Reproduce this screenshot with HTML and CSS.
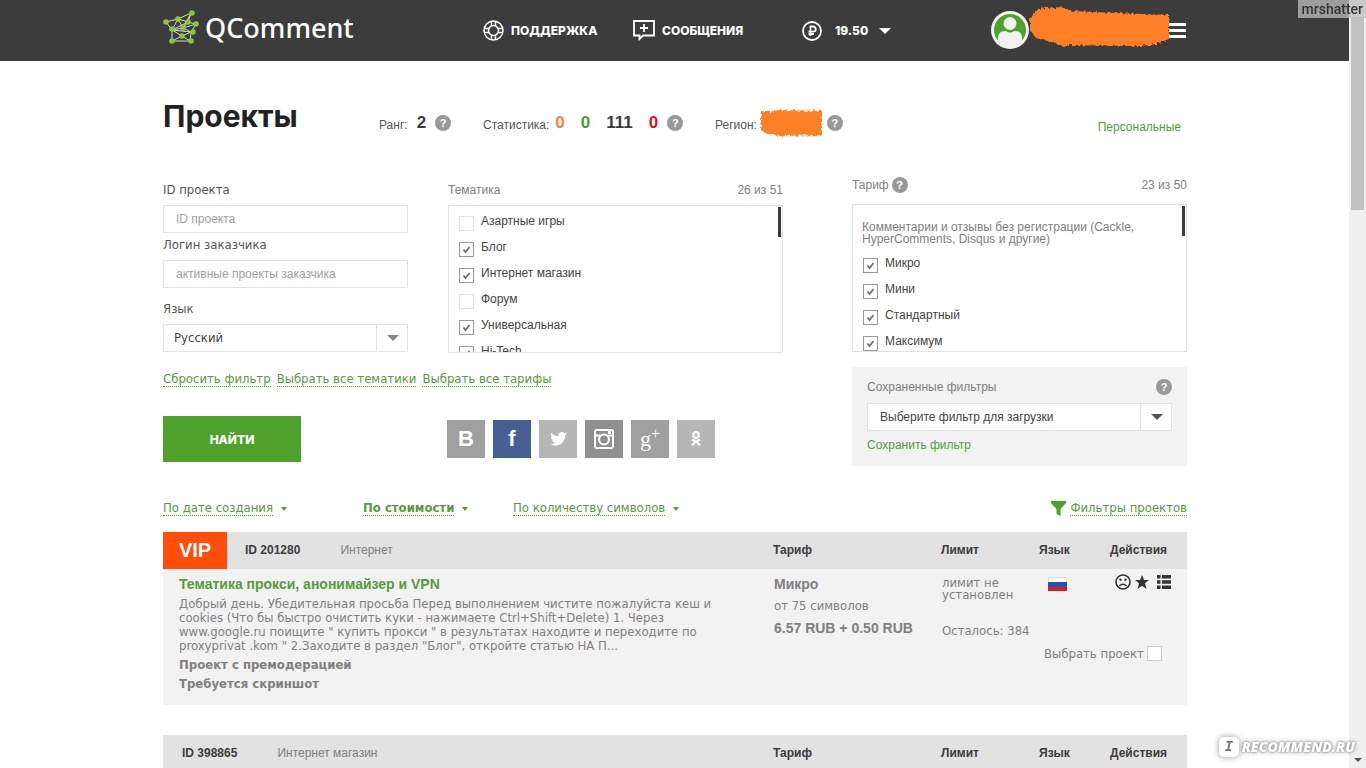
FILE: index.html
```html
<!DOCTYPE html>
<html lang="ru">
<head>
<meta charset="utf-8">
<title>Проекты — QComment</title>
<link rel="stylesheet" href="styles.css">
</head>
<body>
<svg class="defs" aria-hidden="true">
  <defs>
    <filter id="rough" x="-5%" y="-15%" width="110%" height="130%">
      <feTurbulence type="fractalNoise" baseFrequency="0.35" numOctaves="2" seed="4"/>
      <feDisplacementMap in="SourceGraphic" scale="5"/>
      <feGaussianBlur stdDeviation="0.6"/>
    </filter>
  </defs>
</svg>

<header class="topbar">
  <div class="wrap topbar-in">
    <a class="logo" href="#">
      <svg width="36" height="36" viewBox="0 0 36 36" aria-hidden="true">
        <path d="M3 12L15 9L28 3L25 12L33 14L28 22L27 31H9V20L3 12ZM15 9L20 18L25 12L9 20L20 18L33 14M20 18L28 22L19 26L27 31M9 20L19 26L9 31M28 3L20 18M9 20L15 9L25 12M9 20L28 22" fill="none" stroke="#d6dccb" stroke-width="1"/>
        <g fill="#8cc63f"><circle cx="3" cy="12" r="2.8"/><circle cx="15" cy="9" r="2.8"/><circle cx="29" cy="3" r="2.8"/><circle cx="25" cy="12" r="2.8"/><circle cx="33" cy="14" r="2.8"/><circle cx="20" cy="18" r="2.8"/><circle cx="9" cy="19" r="2.8"/><circle cx="30" cy="22" r="2.8"/><circle cx="19" cy="26" r="2.8"/><circle cx="9" cy="31" r="2.8"/><circle cx="28" cy="31" r="2.8"/></g>
      </svg>
      <span>QComment</span>
    </a>
    <nav class="topnav">
      <a class="nav-support" href="#">
        <svg width="21" height="21" viewBox="0 0 21 21" fill="none" stroke="#fff" stroke-width="1.5" aria-hidden="true"><circle cx="10.500" cy="10.500" r="9.500"/><circle cx="10.500" cy="10.500" r="5"/><path d="M8.500 1v5M12.500 1v5M8.500 15v5M12.500 15v5M1 8.500h5M1 12.500h5M15 8.500h5M15 12.500h5"/></svg>
        Поддержка</a>
      <a class="nav-messages" href="#">
        <svg width="22" height="21" viewBox="0 0 22 21" fill="none" stroke="#fff" stroke-width="1.800" aria-hidden="true"><path d="M1 1h20v14.500H10L6.500 19v-3.500H1zM11 4v8M7 8h8"/></svg>
        Сообщения</a>
      <button class="nav-balance" type="button">
        <svg width="20" height="20" viewBox="0 0 20 20" fill="none" stroke="#fff" stroke-width="1.800" aria-hidden="true"><circle cx="10" cy="10" r="9"/><path d="M8.500 15V5.500h2.700a2.500 2.500 0 0 1 0 5.200H6.500M6.500 13h5.500"/></svg>
        <span>19.50</span>
        <i class="tri tri-white"></i>
      </button>
    </nav>
    <div class="user">
      <svg class="avatar" width="38" height="38" viewBox="0 0 38 38" role="img" aria-label="Аватар"><circle cx="19" cy="19" r="19" fill="#f1f1f1"/><circle cx="19" cy="19" r="16" fill="#4ea22c"/><circle cx="19" cy="12.500" r="6.500" fill="#f1f1f1"/><path d="M7 30V27q0-7 7-7h1q4 3 8 0h1q7 0 7 7v3q-3 6-12 6t-12-6z" fill="#f1f1f1"/></svg>
      <svg class="smear" width="148" height="46" viewBox="0 0 148 46" aria-hidden="true"><path filter="url(#rough)" fill="#ff7f27" d="M4 16Q10 3 22 4L35 3L46 7L90 9L143 11V35L130 40L113 42L42 41L38 43L29 39L10 34L4 26Z"/></svg>
      <button class="burger" type="button" aria-label="Меню"><i></i><i></i><i></i></button>
    </div>
  </div>
</header>

<main class="wrap">
  <section class="heading">
    <h1>Проекты</h1>
    <div class="fact fact-rank"><span>Ранг:</span><b>2</b><button class="help" type="button">?</button></div>
    <div class="fact fact-stat"><span>Статистика:</span><b class="orange">0</b><b class="green">0</b><b>111</b><b class="red">0</b><button class="help" type="button">?</button></div>
    <div class="fact fact-region"><span>Регион:</span><svg width="66" height="30" viewBox="0 0 66 30" aria-hidden="true"><path filter="url(#rough)" fill="#ff7f27" d="M2 3L10 4L20 2L63 3V27L22 28L8 26L2 22Z"/></svg><button class="help" type="button">?</button></div>
    <a class="personal" href="#">Персональные</a>
  </section>

  <form class="filters">
    <div class="filters-left">
      <div class="filters-grid">
        <div class="fields">
          <label for="pid">ID проекта</label>
          <input class="text" id="pid" type="text" placeholder="ID проекта">
          <label for="login">Логин заказчика</label>
          <input class="text" id="login" type="text" placeholder="активные проекты заказчика">
          <label class="label-lang" for="lang">Язык</label>
          <div class="pick"><select id="lang"><option>Русский</option></select><i class="tri"></i></div>
        </div>
        <div class="topic">
          <div class="list-head"><span>Тематика</span><span>26 из 51</span></div>
          <div class="list">
            <label><input type="checkbox">Азартные игры</label>
            <label><input type="checkbox" checked>Блог</label>
            <label><input type="checkbox" checked>Интернет магазин</label>
            <label><input type="checkbox">Форум</label>
            <label><input type="checkbox" checked>Универсальная</label>
            <label><input type="checkbox" checked>Hi-Tech</label>
            <i class="thumb"></i>
          </div>
        </div>
      </div>
      <div class="quick">
        <a class="dotted" href="#">Сбросить фильтр</a>
        <a class="dotted" href="#">Выбрать все тематики</a>
        <a class="dotted" href="#">Выбрать все тарифы</a>
      </div>
      <div class="submit-row">
        <button class="find" type="submit">Найти</button>
        <div class="social">
          <a class="vk" href="#">B</a>
          <a class="fb" href="#">f</a>
          <a class="tw" href="#" aria-label="Twitter"><svg width="17" height="14" viewBox="0 0 24 20" fill="#fff"><path d="M24 2.400c-.9.400-1.800.700-2.800.8 1-.6 1.800-1.600 2.200-2.700-1 .6-2 1-3.100 1.200A4.900 4.900 0 0 0 11.900 6C7.700 5.800 4.100 3.800 1.700.9A4.900 4.900 0 0 0 3.200 7.500c-.8 0-1.600-.2-2.200-.6 0 2.300 1.600 4.400 3.900 4.900-.7.200-1.500.200-2.200.1.600 2 2.400 3.400 4.600 3.400A9.900 9.900 0 0 1 0 17.300 14 14 0 0 0 7.500 19.500c9.200 0 14.300-7.700 14-14.600 1-.7 1.800-1.600 2.500-2.500z"/></svg></a>
          <a class="ig" href="#" aria-label="Instagram"><svg width="20" height="20" viewBox="0 0 20 20" fill="none" stroke="#fff"><rect x="1" y="1" width="18" height="18" rx="2" stroke-width="2"/><path d="M1 6.500h5M14 6.500h5" stroke-width="2"/><circle cx="10" cy="10.500" r="5" stroke-width="2.200"/><path d="M14 3.500h3" stroke-width="3"/></svg></a>
          <a class="gp" href="#">g<sup>+</sup></a>
          <a class="ok" href="#" aria-label="Одноклассники"><svg width="12" height="16" viewBox="0 0 12 16" fill="none" stroke="#fff" stroke-width="2.200"><circle cx="6" cy="4" r="2.800"/><path d="M2 8.600q4 2.600 8 0M6 10l-4 4.500M6 10l4 4.500"/></svg></a>
        </div>
      </div>
    </div>
    <div class="filters-right">
      <div class="list-head"><span class="with-help">Тариф <button class="help" type="button">?</button></span><span>23 из 50</span></div>
      <div class="list list-tariff">
        <p>Комментарии и отзывы без регистрации (Cackle, HyperComments, Disqus и другие)</p>
        <label><input type="checkbox" checked>Микро</label>
        <label><input type="checkbox" checked>Мини</label>
        <label><input type="checkbox" checked>Стандартный</label>
        <label><input type="checkbox" checked>Максимум</label>
        <i class="thumb"></i>
      </div>
      <div class="saved">
        <div class="saved-head"><label for="saved">Сохраненные фильтры</label><button class="help" type="button">?</button></div>
        <div class="pick pick-saved"><select id="saved"><option>Выберите фильтр для загрузки</option></select><i class="tri tri-dark"></i></div>
        <a href="#">Сохранить фильтр</a>
      </div>
    </div>
  </form>

  <div class="sort">
    <span class="sort-date"><a class="dotted" href="#">По дате создания</a><i class="tri tri-green"></i></span>
    <span class="sort-cost"><a class="dotted" href="#">По стоимости</a><i class="tri tri-green"></i></span>
    <span><a class="dotted" href="#">По количеству символов</a><i class="tri tri-green"></i></span>
    <span class="sort-filters"><svg width="15" height="15" viewBox="0 0 15 15" aria-hidden="true"><path d="M0 0h15v2L9.500 8v7L5.500 13V8L0 2z" fill="#4ea22c"/></svg><a class="dotted" href="#">Фильтры проектов</a></span>
  </div>

  <table class="project">
    <colgroup><col><col class="c-tariff"><col class="c-limit"><col class="c-lang"><col class="c-actions"></colgroup>
    <thead>
      <tr><th><div class="ident"><strong class="vip">VIP</strong><span class="pid">ID 201280</span><span class="cat">Интернет</span></div></th><th>Тариф</th><th>Лимит</th><th>Язык</th><th>Действия</th></tr>
    </thead>
    <tbody>
      <tr>
        <td class="descr" rowspan="2">
          <h2><a href="#">Тематика прокси, анонимайзер и VPN</a></h2>
          <p>Добрый день. Убедительная просьба Перед выполнением чистите пожалуйста кеш и cookies (Что бы быстро очистить куки - нажимаете Ctrl+Shift+Delete) 1. Через www.google.ru поищите " купить прокси " в результатах находите и переходите по proxyprivat .kom " 2.Заходите в раздел "Блог", откройте статью НА П...</p>
          <b>Проект с премодерацией</b>
          <b>Требуется скриншот</b>
        </td>
        <td class="tariff" rowspan="2"><b>Микро</b><span>от 75 символов</span><b>6.57 RUB + 0.50 RUB</b></td>
        <td class="limit" rowspan="2"><p>лимит не установлен</p><p>Осталось: 384</p></td>
        <td class="flag"><svg width="19" height="14" viewBox="0 0 19 14" role="img" aria-label="Русский"><path fill="#fff" stroke="#ddd" d="M.5.500h18v5H.500z"/><path fill="#1f57b0" d="M0 5h19v5H0z"/><path fill="#dd1b22" d="M0 10h19v4H0z"/></svg></td>
        <td class="actions"><div>
          <button type="button" aria-label="Пожаловаться"><svg width="16" height="16" viewBox="0 0 16 16" fill="none" stroke="#333" stroke-width="1.600"><circle cx="8" cy="8" r="7"/><path d="M4.500 12q3.500-3.500 7 0M4.500 5l2 1.500M11.500 5l-2 1.500"/></svg></button>
          <button type="button" aria-label="В избранное"><svg width="14" height="14" viewBox="0 0 14 14" fill="#333"><path d="M7 0l2 5h5l-4 3.300L11.500 14 7 10.700 2.500 14 4 8.300 0 5h5z"/></svg></button>
          <button class="menu" type="button" aria-label="Список"><svg width="14" height="14" viewBox="0 0 14 14" fill="#333"><path d="M0 0h3.500v3.500H0zM0 5.200h3.500v3.500H0zM0 10.500h3.500V14H0zM5 0h9v3.500H5zM5 5.200h9v3.500H5zM5 10.500h9V14H5z"/></svg></button>
        </div></td>
      </tr>
      <tr><td class="choose" colspan="2"><label>Выбрать проект <input type="checkbox"></label></td></tr>
    </tbody>
  </table>

  <table class="project">
    <colgroup><col><col class="c-tariff"><col class="c-limit"><col class="c-lang"><col class="c-actions"></colgroup>
    <thead>
      <tr><th><div class="ident"><span class="pid">ID 398865</span><span class="cat">Интернет магазин</span></div></th><th>Тариф</th><th>Лимит</th><th>Язык</th><th>Действия</th></tr>
    </thead>
  </table>
</main>

<div class="scrollbar"><i class="scroll-thumb"></i><i class="tri tri-dark scroll-down"></i></div>
<div class="user-tag">mrshatter</div>
<div class="watermark"><span class="bubble">I</span><span>RECOMMEND.RU</span></div>
</body>
</html>
```
FILE: styles.css
```css
* { box-sizing: border-box; }
body {
  --wide: "DejaVu Sans Condensed", "DejaVu Sans", Tahoma, sans-serif;
  margin: 0;
  padding-right: 16px;
  height: 100vh;
  overflow: hidden;
  background: #fff;
  color: #555;
  font: 12px/14px "Liberation Sans", Arial, sans-serif;
}
a { color: #559c3c; text-decoration: none; }
button { border: 0; padding: 0; background: none; font: inherit; color: inherit; cursor: pointer; }
svg { display: block; flex: none; }
.defs { position: absolute; width: 0; height: 0; }
.wrap { max-width: 1024px; margin: 0 auto; }

.tri { flex: none; width: 0; height: 0; border: 6px solid transparent; border-top-color: #888; border-bottom: 0; }
.tri-white { border-top-color: #fff; }
.tri-dark { border-top-color: #555; }
.tri-green { border-width: 4px 3px 0; border-top-color: #4f9a34; }
.dotted { border-bottom: 1px dotted #4f9a34; }
.help {
  flex: none;
  width: 16px;
  height: 16px;
  border-radius: 50%;
  background: #999;
  color: #fff;
  font: bold 11px/16px "Liberation Sans", Arial, sans-serif;
  text-align: center;
}

/* Top bar */
.topbar { background: #3c3c3c; color: #fff; }
.topbar-in { display: flex; align-items: center; height: 61px; }
.topbar a { color: #fff; }
.logo { display: flex; align-items: center; gap: 6px; width: 320px; height: 56px; align-self: flex-start; font: 500 27px/36px "Noto Sans", sans-serif; }
.topnav { display: flex; align-items: center; font: 800 12px/20px Inter, sans-serif; text-transform: uppercase; }
.topnav a, .nav-balance { display: flex; align-items: center; gap: 7px; }
.nav-support { width: 150px; }
.nav-messages { width: 169px; }
.nav-balance span { margin: 0 4px 0 6px; }
.user { display: flex; align-items: center; margin-left: auto; }
.smear { margin: 0 -5px 8px -3px; }
.avatar { margin-bottom: 2px; }
.burger { display: grid; gap: 3px; width: 17px; position: relative; margin-right: 1px; }
.burger i { height: 3px; background: #fff; }

/* Heading */
.heading { display: flex; align-items: center; height: 122px; padding-top: 2px; }
h1 { margin: 0; width: 216px; font: 700 30px/40px Inter, sans-serif; color: #222; padding-bottom: 14px; }
.fact { display: flex; align-items: center; }
.fact span { padding-top: 3px; }
.fact b { font-size: 17px; line-height: 20px; color: #3c3c3c; }
.fact .orange { color: #f58345; }
.fact .green { color: #4f9a34; }
.fact .red { color: #d8141c; }
.fact-rank { width: 104px; gap: 9px; }
.fact-stat { width: 232px; gap: 16px; }
.fact-stat span { margin-right: -10px; }
.fact-stat .help { margin-left: -7px; }
.fact-region { gap: 2px; }
.personal { margin-left: auto; padding-right: 6px; padding-top: 8px; }

/* Filters */
.filters { display: flex; justify-content: space-between; align-items: flex-start; }
.filters-left { width: 620px; }
.filters-right { width: 335px; margin-top: -7px; }
.filters-grid { display: grid; grid-template-columns: 245px 335px; gap: 40px; }
.fields { display: flex; flex-direction: column; font-family: var(--wide); font-size: 13px; }
.fields label { padding: 0 0 8px; line-height: 14px; margin-top: 5px; }
.fields label:first-child { margin-top: 0; }
.fields .label-lang { margin-top: 14px; }
.text { height: 28px; border: 1px solid #e2e2e2; padding: 0 12px; font: 12px "Liberation Sans", Arial, sans-serif; color: #444; }
.text::placeholder { color: #a0a0a0; }
.pick { position: relative; height: 28px; border: 1px solid #e2e2e2; background: #fff; }
.pick select { appearance: none; width: 100%; height: 100%; border: 0; background: none; padding: 0 42px 0 10px; font: inherit; color: #444; }
.pick::after { content: ""; position: absolute; right: 30px; top: 0; bottom: 0; border-left: 1px solid #e2e2e2; }
.pick .tri { position: absolute; right: 8px; top: 10px; }
.list-head { display: flex; justify-content: space-between; align-items: center; padding-bottom: 8px; line-height: 14px; color: #808080; }
.list { position: relative; height: 148px; overflow: hidden; border: 1px solid #e2e2e2; padding: 2px 10px; }
.list label { display: flex; align-items: center; gap: 7px; height: 26px; color: #444; }
.thumb { position: absolute; top: 1px; right: 1px; width: 3px; height: 30px; background: #3c3c3c; }
input[type="checkbox"] { appearance: none; flex: none; width: 15px; height: 15px; margin: 4px 0 0; border: 1px solid #e2e2e2; background: #fff; }
input[type="checkbox"]:checked {
  border-color: #999;
  background: url("data:image/svg+xml,%3Csvg xmlns='http://www.w3.org/2000/svg' viewBox='0 0 13 13'%3E%3Cpath d='M3.500 6.500l2 2.500 4-5' fill='none' stroke='%23707070' stroke-width='1.800'/%3E%3C/svg%3E");
}
.with-help { display: flex; align-items: center; gap: 3px; }
.filters-right .list-head { line-height: 16px; height: 28px; padding-bottom: 10px; }
.list-tariff p { margin: 14px 0 5px -1px; line-height: 12px; color: #808080; }
.quick { display: flex; gap: 6px; padding-top: 19px; font-family: var(--wide); font-size: 13px; }
.submit-row { display: flex; align-items: center; gap: 146px; padding-top: 29px; }
.find { width: 138px; height: 46px; background: #4ea22c; color: #fff; font: 800 12px Inter, sans-serif; text-transform: uppercase; }
.social { display: flex; gap: 8px; }
.social a { display: flex; align-items: center; justify-content: center; width: 38px; height: 38px; background: #a0a0a0; color: #fff; font: bold 22px/38px "Liberation Sans", sans-serif; }
.social .fb { background: #475f94; }
.social .tw, .social .ok { background: #b6b6b6; }
.social .ig { background: #8f8f8f; }
.social .gp { font: 22px/38px "Liberation Serif", serif; }
.gp sup { font-size: 16px; line-height: 16px; align-self: flex-start; padding-top: 6px; }
.saved { margin-top: 15px; padding: 12px 15px; background: #f2f2f2; height: 99px; color: #808080; }
.saved-head { display: flex; justify-content: space-between; align-items: center; padding-bottom: 8px; }
.pick-saved select { padding-left: 12px; }
.saved a { display: block; padding-top: 7px; }

/* Sorting */
.sort { display: flex; padding-top: 35px; font-family: var(--wide); font-size: 13px; }
.sort span { display: flex; align-items: center; gap: 8px; }
.sort .sort-date { width: 200px; }
.sort .sort-cost { width: 150px; font-weight: bold; }
.sort .sort-filters { margin-left: auto; gap: 4px; }

/* Projects */
.project { width: 100%; margin: 16px 0 30px; border-collapse: collapse; table-layout: fixed; background: #f2f2f2; color: #808080; }
.c-tariff { width: 168px; }
.c-limit { width: 98px; }
.c-lang { width: 71px; }
.c-actions { width: 77px; }
th { height: 37px; padding: 0 0 2px; background: #e2e2e2; color: #3c3c3c; text-align: left; }
th:first-child { padding: 0; }
td { padding: 0; vertical-align: top; }
.ident { display: flex; align-items: center; padding-left: 19px; }
.ident:has(.vip) { padding-left: 0; }
.vip { width: 64px; margin-right: 18px; background: #ff4e0a; color: #fff; text-align: center; font-size: 20px; line-height: 37px; }
.pid { margin-right: 40px; padding-bottom: 2px; }
.cat { font-weight: normal; color: #808080; padding-bottom: 2px; }
.descr { height: 136px; padding: 8px 52px 12px 16px; font: 13px/14px var(--wide); }
.descr h2 { margin: 0 0 5px; font: bold 14px/15px "Liberation Sans", Arial, sans-serif; }
.descr p { margin: 0 0 2px; }
.descr b { display: block; line-height: 19px; }
.tariff { padding: 8px 0 0 1px; }
.tariff b { display: block; font-size: 14px; line-height: 15px; }
.tariff span { display: block; padding: 7px 0 8px; font-family: var(--wide); font-size: 13px; }
.limit { padding-left: 1px; font-family: var(--wide); font-size: 13px; }
.limit p { margin: 8px 0 24px; line-height: 12px; }
.flag { height: 77px; padding: 8px 0 0 9px; }
.actions { padding: 5px 0 0 5px; }
.actions div { display: flex; align-items: center; gap: 4px; }
.menu { margin-left: 4px; }
.choose label { display: flex; align-items: center; gap: 3px; padding-left: 5px; font-family: var(--wide); font-size: 13px; }
.choose input[type="checkbox"] { margin: 0; border-color: #ccc; }

/* Overlays */
.scrollbar { position: fixed; top: 0; right: 0; bottom: 0; width: 17px; background: #f0f0f0; }
.scroll-thumb { position: absolute; top: 17px; left: 2px; width: 13px; height: 193px; background: #c1c1c1; }
.scroll-down { position: absolute; bottom: 6px; left: 5px; border-width: 4px 4px 0; }
.user-tag { position: fixed; top: 0; right: 0; padding: 0 3px 0 4px; background: rgba(190, 190, 190, .75); color: #333; font: 500 14px/18px Roboto, sans-serif; }
.watermark { position: fixed; right: 11px; bottom: 11px; display: flex; align-items: center; gap: 3px; color: #fff; font: italic 800 14px/20px "Open Sans", sans-serif; text-shadow: 0 0 2px #999, 0 0 3px #999, 0 0 5px #aaa; }
.bubble { width: 20px; height: 20px; border-radius: 5px; background: #fff; box-shadow: 0 0 6px #999; color: #777; text-align: center; font-family: "Liberation Mono", monospace; text-shadow: none; }
```
